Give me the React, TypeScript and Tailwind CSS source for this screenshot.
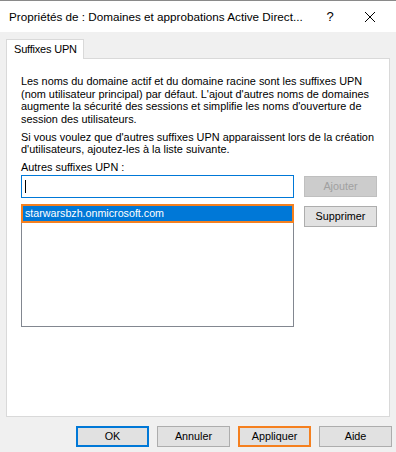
import React from "react";

function Btn({
  label,
  className = "",
  disabled = false,
}: {
  label: string;
  className?: string;
  disabled?: boolean;
}) {
  return (
    <div
      className={
        "flex items-center justify-center w-[73px] h-[21px] text-[10.8px] " +
        (disabled
          ? "bg-[#cccccc] border border-[#bfbfbf] text-[#a0a0a0] "
          : "bg-[#e1e1e1] border border-[#adadad] text-black ") +
        className
      }
    >
      {label}
    </div>
  );
}

export default function App() {
  return (
    <div
      className="w-[396px] h-[452px] bg-[#f0f0f0] border-t border-[#8a8a8a] flex flex-col overflow-hidden text-black"
      style={{ fontFamily: '"Liberation Sans", Arial, sans-serif' }}
    >
      {/* Title bar */}
      <div className="h-[31px] bg-white flex items-center shrink-0">
        <div className="pl-[9px] text-[11.7px] w-[318px] whitespace-nowrap">
          Propriétés de : Domaines et approbations Active Direct...
        </div>
        <div className="w-[24px] text-center text-[13px]">?</div>
        <div className="ml-[22px]">
          <svg width="12" height="12" viewBox="0 0 12 12">
            <path d="M1 1 L11 11 M11 1 L1 11" stroke="#000" strokeWidth="1" />
          </svg>
        </div>
      </div>

      {/* Body */}
      <div className="px-[6px] pt-[7px] flex flex-col">
        {/* Tab */}
        <div className="flex relative z-10 -mb-px">
          <div className="w-[78px] h-[20px] bg-white border border-b-0 border-[#d9d9d9] text-[11px] tracking-[-0.2px] pl-[7px] flex items-center">
            Suffixes UPN
          </div>
        </div>
        {/* Panel */}
        <div className="w-[384px] h-[359px] bg-white border border-[#d9d9d9] pl-[14px] pt-[16px] text-[10.9px] leading-[12.5px] whitespace-nowrap">
          <p>
            Les noms du domaine actif et du domaine racine sont les suffixes UPN
            <br />
            (nom utilisateur principal) par défaut. L'ajout d'autres noms de domaines
            <br />
            augmente la sécurité des sessions et simplifie les noms d'ouverture de
            <br />
            session des utilisateurs.
          </p>
          <p className="mt-[5.5px]">
            Si vous voulez que d'autres suffixes UPN apparaissent lors de la création
            <br />
            d'utilisateurs, ajoutez-les à la liste suivante.
          </p>
          <div className="mt-[5.5px]">Autres suffixes UPN :</div>
          <div className="flex mt-[1px] gap-[10px]">
            <div className="flex flex-col">
              <div className="w-[273px] h-[23px] border border-[#0078d7] flex items-center pl-[3px]">
                <div className="w-[1px] h-[13px] bg-black" />
              </div>
              <div className="mt-[6px] w-[273px] h-[123px] border border-[#828790] relative">
                <div className="absolute left-[-1px] right-[-1px] top-[-1px] h-[19px] border-2 border-[#f5801f] bg-[#0078d7] text-white flex items-center pl-[2px] text-[10.7px]">
                  starwarsbzh.onmicrosoft.com
                </div>
              </div>
            </div>
            <div className="flex flex-col pt-[1px]">
              <Btn label="Ajouter" disabled />
              <Btn label="Supprimer" className="mt-[9px] h-[20px]" />
            </div>
          </div>
        </div>
        {/* Footer buttons */}
        <div className="flex justify-end gap-[8px] mt-[9px] mr-[-2px]">
          <Btn label="OK" className="!border-2 !border-[#0078d7]" />
          <Btn label="Annuler" />
          <Btn label="Appliquer" className="!border-2 !border-[#f5801f]" />
          <Btn label="Aide" />
        </div>
      </div>
    </div>
  );
}
